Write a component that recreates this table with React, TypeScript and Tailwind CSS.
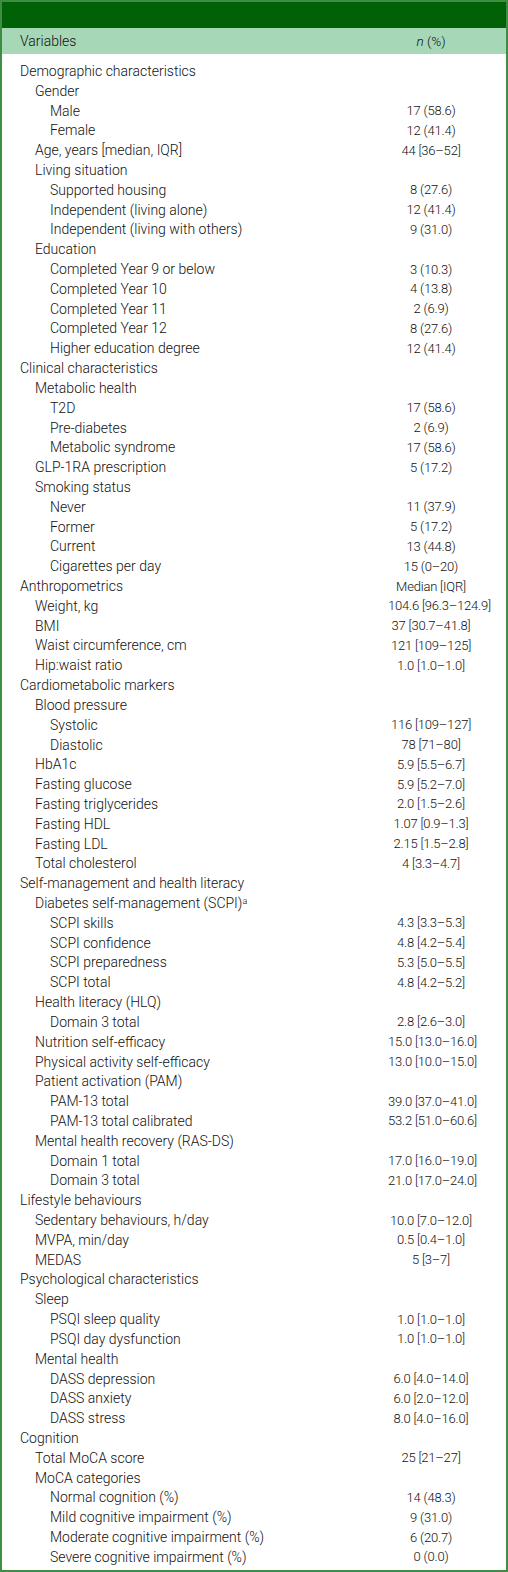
import React from "react";

type Row = { label: React.ReactNode; level: 0 | 1 | 2; value?: string };

const rows: Row[] = [
  { label: "Demographic characteristics", level: 0 },
  { label: "Gender", level: 1 },
  { label: "Male", level: 2, value: "17 (58.6)" },
  { label: "Female", level: 2, value: "12 (41.4)" },
  { label: "Age, years [median, IQR]", level: 1, value: "44 [36–52]" },
  { label: "Living situation", level: 1 },
  { label: "Supported housing", level: 2, value: "8 (27.6)" },
  { label: "Independent (living alone)", level: 2, value: "12 (41.4)" },
  { label: "Independent (living with others)", level: 2, value: "9 (31.0)" },
  { label: "Education", level: 1 },
  { label: "Completed Year 9 or below", level: 2, value: "3 (10.3)" },
  { label: "Completed Year 10", level: 2, value: "4 (13.8)" },
  { label: "Completed Year 11", level: 2, value: "2 (6.9)" },
  { label: "Completed Year 12", level: 2, value: "8 (27.6)" },
  { label: "Higher education degree", level: 2, value: "12 (41.4)" },
  { label: "Clinical characteristics", level: 0 },
  { label: "Metabolic health", level: 1 },
  { label: "T2D", level: 2, value: "17 (58.6)" },
  { label: "Pre-diabetes", level: 2, value: "2 (6.9)" },
  { label: "Metabolic syndrome", level: 2, value: "17 (58.6)" },
  { label: "GLP-1RA prescription", level: 1, value: "5 (17.2)" },
  { label: "Smoking status", level: 1 },
  { label: "Never", level: 2, value: "11 (37.9)" },
  { label: "Former", level: 2, value: "5 (17.2)" },
  { label: "Current", level: 2, value: "13 (44.8)" },
  { label: "Cigarettes per day", level: 2, value: "15 (0–20)" },
  { label: "Anthropometrics", level: 0, value: "Median [IQR]" },
  { label: "Weight, kg", level: 1, value: "104.6 [96.3–124.9]" },
  { label: "BMI", level: 1, value: "37 [30.7–41.8]" },
  { label: "Waist circumference, cm", level: 1, value: "121 [109–125]" },
  { label: "Hip:waist ratio", level: 1, value: "1.0 [1.0–1.0]" },
  { label: "Cardiometabolic markers", level: 0 },
  { label: "Blood pressure", level: 1 },
  { label: "Systolic", level: 2, value: "116 [109–127]" },
  { label: "Diastolic", level: 2, value: "78 [71–80]" },
  { label: "HbA1c", level: 1, value: "5.9 [5.5–6.7]" },
  { label: "Fasting glucose", level: 1, value: "5.9 [5.2–7.0]" },
  { label: "Fasting triglycerides", level: 1, value: "2.0 [1.5–2.6]" },
  { label: "Fasting HDL", level: 1, value: "1.07 [0.9–1.3]" },
  { label: "Fasting LDL", level: 1, value: "2.15 [1.5–2.8]" },
  { label: "Total cholesterol", level: 1, value: "4 [3.3–4.7]" },
  { label: "Self-management and health literacy", level: 0 },
  {
    label: (
      <>
        Diabetes self-management (SCPI)<sup className="text-[9px]">a</sup>
      </>
    ),
    level: 1,
  },
  { label: "SCPI skills", level: 2, value: "4.3 [3.3–5.3]" },
  { label: "SCPI confidence", level: 2, value: "4.8 [4.2–5.4]" },
  { label: "SCPI preparedness", level: 2, value: "5.3 [5.0–5.5]" },
  { label: "SCPI total", level: 2, value: "4.8 [4.2–5.2]" },
  { label: "Health literacy (HLQ)", level: 1 },
  { label: "Domain 3 total", level: 2, value: "2.8 [2.6–3.0]" },
  { label: "Nutrition self-efficacy", level: 1, value: "15.0 [13.0–16.0]" },
  { label: "Physical activity self-efficacy", level: 1, value: "13.0 [10.0–15.0]" },
  { label: "Patient activation (PAM)", level: 1 },
  { label: "PAM-13 total", level: 2, value: "39.0 [37.0–41.0]" },
  { label: "PAM-13 total calibrated", level: 2, value: "53.2 [51.0–60.6]" },
  { label: "Mental health recovery (RAS-DS)", level: 1 },
  { label: "Domain 1 total", level: 2, value: "17.0 [16.0–19.0]" },
  { label: "Domain 3 total", level: 2, value: "21.0 [17.0–24.0]" },
  { label: "Lifestyle behaviours", level: 0 },
  { label: "Sedentary behaviours, h/day", level: 1, value: "10.0 [7.0–12.0]" },
  { label: "MVPA, min/day", level: 1, value: "0.5 [0.4–1.0]" },
  { label: "MEDAS", level: 1, value: "5 [3–7]" },
  { label: "Psychological characteristics", level: 0 },
  { label: "Sleep", level: 1 },
  { label: "PSQI sleep quality", level: 2, value: "1.0 [1.0–1.0]" },
  { label: "PSQI day dysfunction", level: 2, value: "1.0 [1.0–1.0]" },
  { label: "Mental health", level: 1 },
  { label: "DASS depression", level: 2, value: "6.0 [4.0–14.0]" },
  { label: "DASS anxiety", level: 2, value: "6.0 [2.0–12.0]" },
  { label: "DASS stress", level: 2, value: "8.0 [4.0–16.0]" },
  { label: "Cognition", level: 0 },
  { label: "Total MoCA score", level: 1, value: "25 [21–27]" },
  { label: "MoCA categories", level: 1 },
  { label: "Normal cognition (%)", level: 2, value: "14 (48.3)" },
  { label: "Mild cognitive impairment (%)", level: 2, value: "9 (31.0)" },
  { label: "Moderate cognitive impairment (%)", level: 2, value: "6 (20.7)" },
  { label: "Severe cognitive impairment (%)", level: 2, value: "0 (0.0)" },
];

const indent = ["pl-[18px]", "pl-[33px]", "pl-[48px]"];

export default function App() {
  return (
    <div className="w-[508px] border-2 border-[#3f8d43] bg-white font-['Roboto',sans-serif] text-[14px] font-light text-[#111]">
      {/* title band */}
      <div className="h-[26px] bg-[#006107]" />

      {/* column headings */}
      <div className="flex h-[26px] items-center bg-[#a6d7b7]">
        <div className="flex-1 pl-[18px]">Variables</div>
        <div className="w-[86px] mr-[32px] whitespace-nowrap text-center text-[13.5px]">
          <i>n</i> (%)
        </div>
      </div>

      {/* body */}
      <div className="pt-[7px] pb-[3px]">
        {rows.map((r, i) => (
          <div key={i} className="flex h-[19.82px] items-center leading-none">
            <div className={`flex-1 whitespace-nowrap ${indent[r.level]}`}>{r.label}</div>
            <div className="w-[86px] mr-[32px] whitespace-nowrap text-center text-[13px] tracking-[-0.2px]">
              {r.value}
            </div>
          </div>
        ))}
      </div>
    </div>
  );
}
